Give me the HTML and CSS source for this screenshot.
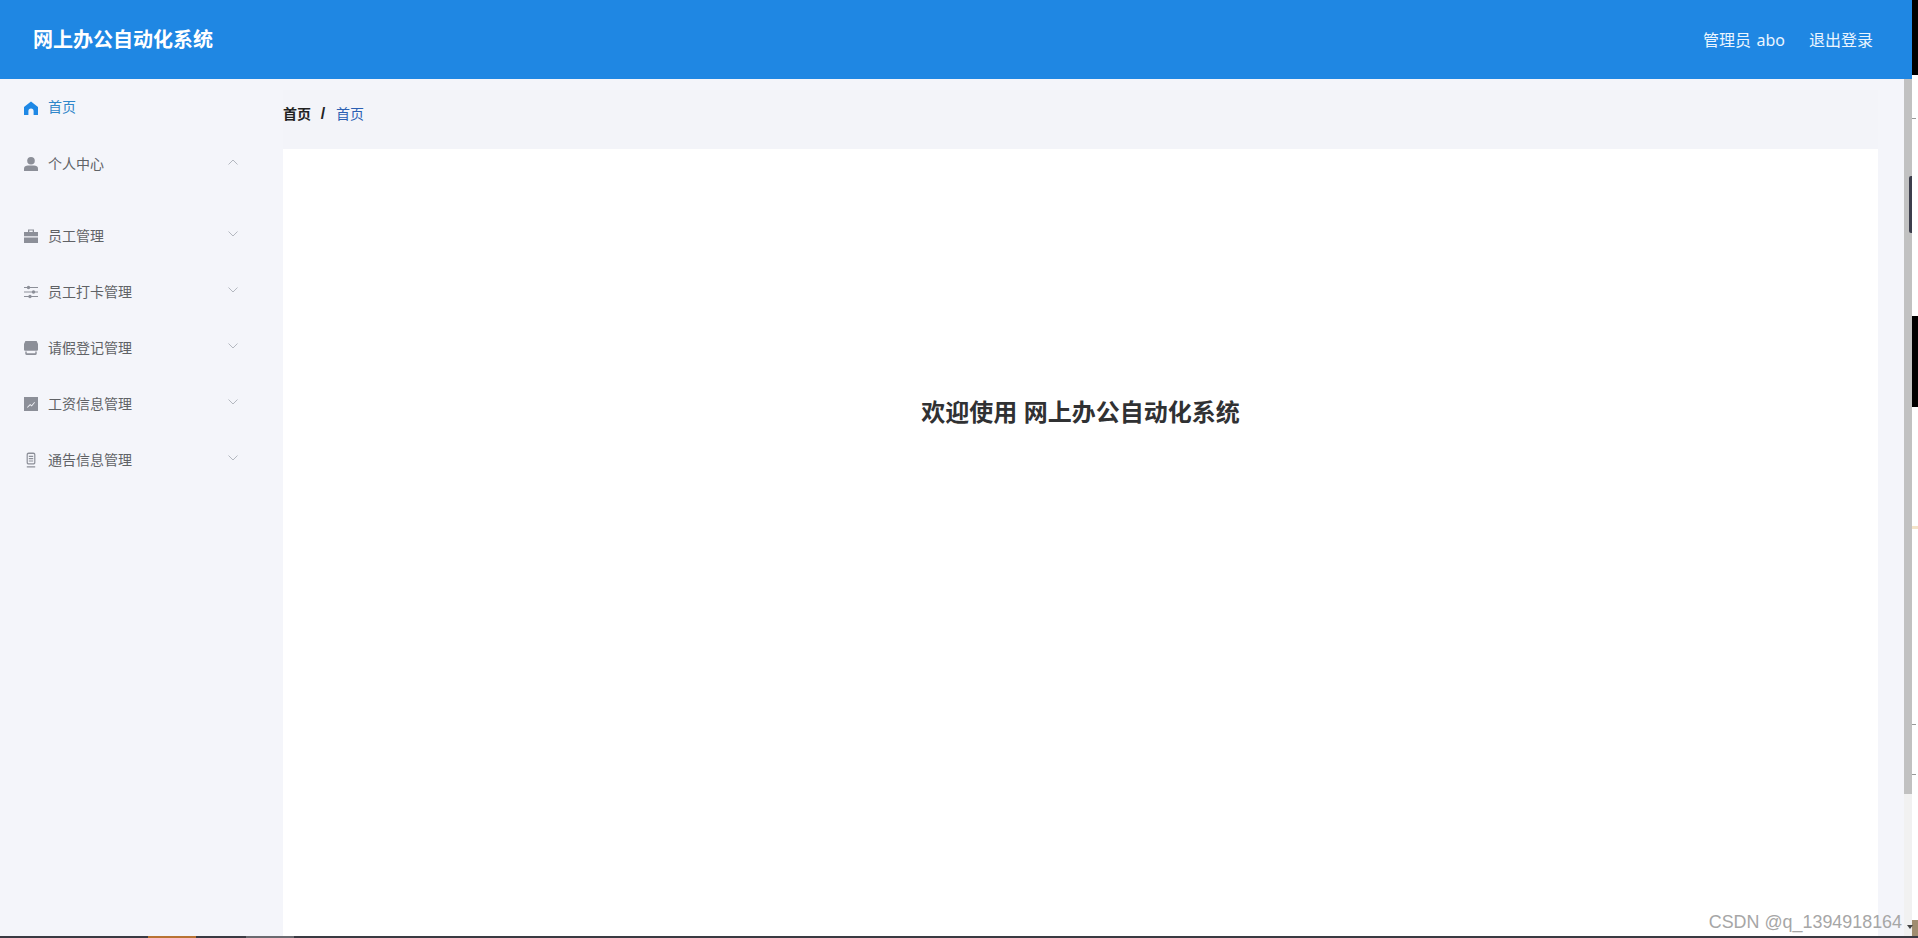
FILE: index.html
```html
<!DOCTYPE html>
<html lang="zh-CN">

<head>
    <meta charset="utf-8">
    <title>网上办公自动化系统</title>
    <link rel="stylesheet" href="styles.css">
</head>

<body>
    <div class="screen">
        <div class="page">
            <header class="topbar">
                <div class="brand">网上办公自动化系统</div>
                <div class="user">
                    <span class="user-name">管理员 abo</span>
                    <a class="logout">退出登录</a>
                </div>
            </header>

            <div class="layout">
                <nav class="sidebar">
                    <div class="menu-item active">
                        <svg class="icon" viewBox="0 0 14 14"><path d="M7 .4 14 6v8H9.600V10.200a2.600 2.600 0 0 0-5.200 0V14H0V6z" /></svg>
                        <span>首页</span>
                    </div>
                    <div class="menu-item open">
                        <svg class="icon" viewBox="0 0 14 14"><circle cx="7" cy="3.800" r="3.800" /><path d="M0 14v-2.600C0 9.200 2 8.400 4 8.400h6c2 0 4 .8 4 3V14z" /></svg>
                        <span>个人中心</span>
                        <svg class="arrow" viewBox="0 0 10 6"><path d="M.5 5.500 5 1l4.500 4.500" /></svg>
                    </div>
                    <div class="menu-item">
                        <svg class="icon" viewBox="0 0 14 14"><path d="M4 3V.4h6V3h4v4.200H0V3zM5.300 1.600V3h3.400V1.600zM0 8.400h14V14H0z" /></svg>
                        <span>员工管理</span>
                        <svg class="arrow" viewBox="0 0 10 6"><path d="M.5.5 5 5 9.500.5" /></svg>
                    </div>
                    <div class="menu-item">
                        <svg class="icon" viewBox="0 0 14 14"><path d="M0 2h14v1.100H0zM0 6.500h14v1.100H0zM0 11h14v1.100H0z" /><circle cx="4.500" cy="2.500" r="1.700" /><circle cx="9.500" cy="7" r="1.700" /><circle cx="6" cy="11.500" r="1.700" /></svg>
                        <span>员工打卡管理</span>
                        <svg class="arrow" viewBox="0 0 10 6"><path d="M.5.5 5 5 9.500.5" /></svg>
                    </div>
                    <div class="menu-item">
                        <svg class="icon" viewBox="0 0 14 14"><path d="M1.400 0h11.200L14 3v5.400c0 .9-.6 1.400-1.300 1.400H1.300C.6 9.800 0 9.300 0 8.400V3zM1.300 10.600h1.400v1.700h8.600v-1.700h1.400v2.200c0 .7-.5 1.200-1.200 1.200h-9c-.7 0-1.200-.5-1.200-1.200z" /></svg>
                        <span>请假登记管理</span>
                        <svg class="arrow" viewBox="0 0 10 6"><path d="M.5.5 5 5 9.500.5" /></svg>
                    </div>
                    <div class="menu-item">
                        <svg class="icon" viewBox="0 0 14 14"><path fill-rule="evenodd" d="M0 0h14v14H0zM3 10.200l.6.600 2.600-2.500 1.500 1.200 3.300-3.900-.6-.5-2.800 3.200-1.500-1.200z" /></svg>
                        <span>工资信息管理</span>
                        <svg class="arrow" viewBox="0 0 10 6"><path d="M.5.5 5 5 9.500.5" /></svg>
                    </div>
                    <div class="menu-item">
                        <svg class="icon" viewBox="0 0 14 14"><path fill-rule="evenodd" d="M4.800-.4h4.400c1.300 0 2.200.9 2.200 2.200v7.600c0 1.300-.9 2.200-2.200 2.200H4.800c-1.300 0-2.200-.9-2.200-2.200V1.800C2.600.5 3.500-.4 4.800-.4zM4.800.9c-.6 0-1 .4-1 1v7.400c0 .6.400 1 1 1h4.400c.6 0 1-.4 1-1V1.900c0-.6-.4-1-1-1zM4.800 2.800h4.400v1.100H4.800zM4.800 5.100h4.400v1.100H4.800zM4.800 7.400h4.400v1.100H4.800zM2.800 13.300h8.400v1.200H2.800z" /></svg>
                        <span>通告信息管理</span>
                        <svg class="arrow" viewBox="0 0 10 6"><path d="M.5.5 5 5 9.500.5" /></svg>
                    </div>
                </nav>

                <main class="main">
                    <div class="breadcrumb">
                        <b>首页</b>
                        <i>/</i>
                        <span>首页</span>
                    </div>
                    <section class="content">
                        <h2>欢迎使用 网上办公自动化系统</h2>
                    </section>
                </main>

                <div class="scrollbar">
                    <div class="thumb"></div>
                </div>
            </div>
        </div>

        <!-- 截图右边露出的桌面 -->
        <div class="desk">
            <div class="desk-top"></div>
            <div class="desk-tick"></div>
            <div class="desk-black"></div>
            <div class="desk-cream"></div>
            <div class="desk-tick low"></div>
            <div class="desk-tick lower"></div>
            <div class="desk-brown"></div>
        </div>

        <div class="desk-handle"></div>
        <div class="desk-corner"></div>
        <div class="watermark">CSDN @q_1394918164</div>

        <div class="taskbar">
            <div class="task orange"></div>
            <div class="task grey"></div>
        </div>
    </div>
</body>

</html>
```

FILE: styles.css
```css
html,
body {
    margin: 0;
    height: 100%;
    overflow: hidden;
}

body {
    background: #fff;
    font-family: "Liberation Sans", "Noto Sans CJK SC", sans-serif;
}

.screen {
    position: relative;
    display: flex;
    width: 1918px;
    height: 938px;
    overflow: hidden;
}

.page {
    display: flex;
    flex-direction: column;
    width: 1912px;
    height: 100%;
}

.topbar {
    display: flex;
    flex: none;
    align-items: center;
    justify-content: space-between;
    height: 79px;
    padding: 0 39px 2px 33px;
    box-sizing: border-box;
    background: #1f87e3;
    color: #fff;
}

.brand {
    font-size: 20px;
    font-weight: bold;
}

.user {
    display: flex;
    gap: 24px;
    font-size: 16px;
    color: #eaf5ff;
}

.user-name {
    font-family: "Noto Sans", "Noto Sans CJK SC", sans-serif;
    word-spacing: 1.4px;
}

.layout {
    display: flex;
    flex: 1;
    min-height: 0;
    background: #f4f5fa;
}

.sidebar {
    flex: none;
    width: 260px;
}

.menu-item {
    display: flex;
    align-items: center;
    gap: 10px;
    height: 56px;
    padding: 0 22px 0 24px;
    font-size: 14px;
    color: #606266;
}

.menu-item.active {
    color: #2f86c9;
}

.menu-item.active span {
    margin-bottom: 2px;
}

.menu-item.open {
    margin-bottom: 16px;
}

.icon {
    flex: none;
    width: 14px;
    height: 14px;
    margin-top: 2px;
    fill: #8c8f98;
    overflow: visible;
}

.active .icon {
    fill: #1e88e5;
}

.arrow {
    flex: none;
    width: 10px;
    height: 6px;
    margin-left: auto;
    margin-bottom: 3px;
    fill: none;
    stroke: #b4b8c0;
    stroke-width: 1;
}

.main {
    flex: 1;
    min-width: 0;
    padding: 11px 26px 0 23px;
}

.breadcrumb {
    display: flex;
    align-items: center;
    height: 59px;
    padding-bottom: 14px;
    box-sizing: border-box;
    background: #f3f4f9;
    font-size: 14px;
    color: #2b5fb3;
}

.breadcrumb b {
    color: #222;
}

.breadcrumb i {
    width: 6px;
    margin: 3px 10px 0 9px;
    font-size: 16px;
    font-style: normal;
    font-weight: bold;
    text-align: center;
    color: #222;
}

.content {
    height: 100%;
    padding-top: 248px;
    background: #fff;
    text-align: center;
}

.content h2 {
    margin: 0;
    font-size: 24px;
    line-height: 32px;
    color: #303133;
}

.scrollbar {
    flex: none;
    width: 8px;
    background: #f1f1f1;
}

.thumb {
    height: 715px;
    background: #c1c1c1;
}

.desk {
    display: flex;
    flex-direction: column;
    width: 6px;
}

.desk-top {
    height: 75px;
    background: #000;
}

.desk-tick {
    width: 4px;
    height: 1px;
    margin-top: 43px;
    background: #999;
}

.desk-tick.low {
    margin-top: 195px;
}

.desk-tick.lower {
    margin-top: 49px;
}

.desk-black {
    height: 91px;
    margin-top: 197px;
    background: #000;
}

.desk-cream {
    height: 3px;
    margin-top: 119px;
    background: #f3e3c8;
}

.desk-brown {
    height: 16px;
    margin-top: auto;
    margin-bottom: 2px;
    background: #a08d70;
}

.desk-handle {
    position: absolute;
    top: 176px;
    left: 1909px;
    width: 3px;
    height: 57px;
    border-radius: 2px 0 0 2px;
    background: #3c3e4c;
}

.desk-corner {
    position: absolute;
    top: 925px;
    left: 1907px;
    border-top: 4px solid #444;
    border-left: 3px solid transparent;
    border-right: 3px solid transparent;
}

.watermark {
    position: absolute;
    right: 16px;
    bottom: 6px;
    font-size: 17.9px;
    line-height: 20px;
    color: #a6a6a6;
}

.taskbar {
    position: absolute;
    left: 0;
    right: 0;
    bottom: 0;
    display: flex;
    height: 2px;
    background: #3a3a42;
}

.task.orange {
    width: 48px;
    margin-left: 148px;
    background: #b87333;
}

.task.grey {
    width: 48px;
    margin-left: 50px;
    background: #6a6a70;
}
```
